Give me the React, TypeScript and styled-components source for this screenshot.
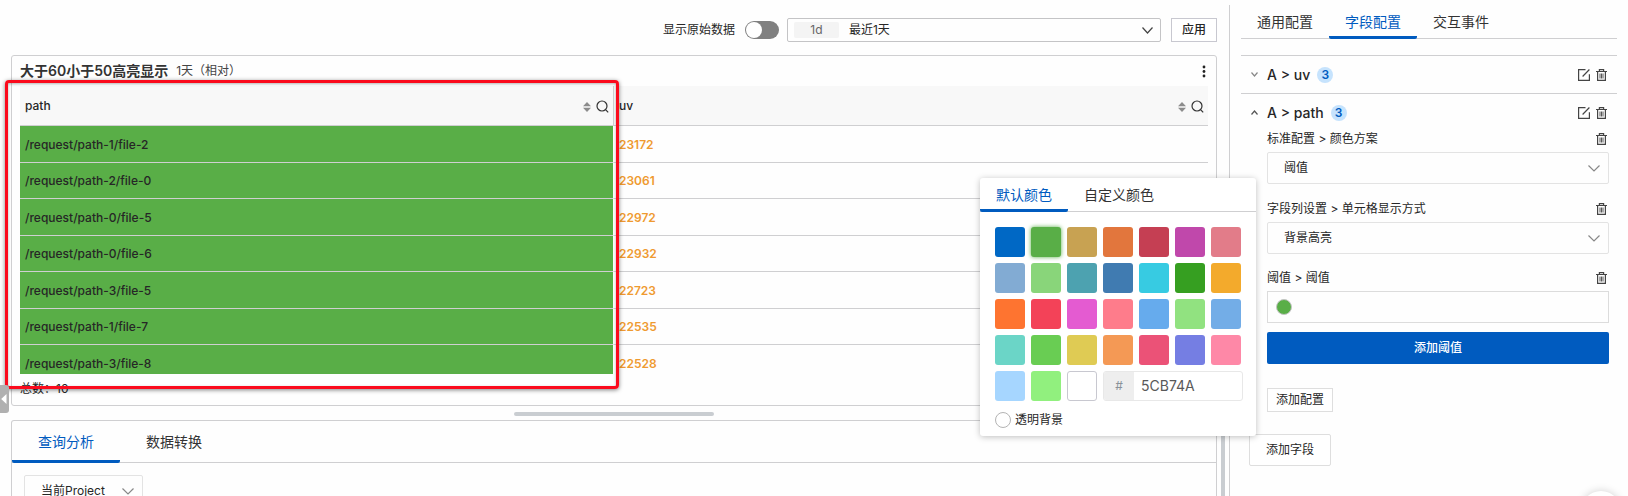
import React, { useState } from "react";
import styled, { createGlobalStyle } from "styled-components";

const BLUE = "#005bbf";
const LINE = "#cfcfd1";
const GREEN = "#59ae47";

const GlobalStyle = createGlobalStyle`
  *, *::before, *::after { box-sizing: border-box; }
  body {
    margin: 0;
    background: #fefefe;
    color: #262626;
    font: 12px/18px Inter, "Noto Sans CJK SC", sans-serif;
  }
  button, input, select { font: inherit; color: inherit; margin: 0; }
  button { cursor: pointer; }
  svg { display: block; flex: none; }
`;

const Page = styled.div`
  position: relative;
  display: flex;
  height: 100vh;
  overflow: hidden;
`;

const Main = styled.main`
  position: relative;
  flex: 1;
  min-width: 0;
  display: flex;
  flex-direction: column;
  padding: 18px 12px 0 11px;
`;

const Toolbar = styled.header`
  display: flex;
  justify-content: flex-end;
  align-items: center;
  height: 24px;
  margin-bottom: 13px;
`;

const SwitchLabel = styled.label`
  display: flex;
  align-items: center;
  gap: 10px;
  margin-right: 8px;
`;

const Switch = styled.input`
  appearance: none;
  width: 34px;
  height: 18px;
  border-radius: 9px;
  background: #808080;
  display: flex;
  align-items: center;
  padding: 1px;
  &::before {
    content: "";
    width: 16px;
    height: 16px;
    border-radius: 50%;
    background: #fff;
  }
`;

const RangeBox = styled.div`
  position: relative;
  display: flex;
  align-items: center;
  width: 374px;
  height: 24px;
  padding-left: 6px;
  border: 1px solid #c4c4c6;
  border-radius: 2px;
  margin-right: 10px;
`;

const RangeTag = styled.span`
  width: 45px;
  height: 16px;
  border-radius: 2px;
  background: #f4f4f4;
  color: #666;
  line-height: 16px;
  text-align: center;
`;

const BareSelect = styled.select<{ $indent: number }>`
  appearance: none;
  flex: 1;
  align-self: stretch;
  min-width: 0;
  border: 0;
  background: none;
  padding: 0 30px 0 ${(p) => p.$indent}px;
`;

const SelectArrow = styled.span<{ $right: number }>`
  position: absolute;
  right: ${(p) => p.$right}px;
  top: 0;
  bottom: 0;
  display: flex;
  align-items: center;
  pointer-events: none;
`;

const Button = styled.button<{ $size?: "small" | "medium" }>`
  height: ${(p) => (p.$size === "medium" ? 32 : 24)}px;
  padding: 0 ${(p) => (p.$size === "medium" ? 16 : 8)}px;
  border: 1px solid #dedede;
  border-radius: ${(p) => (p.$size === "medium" ? 2 : 0)}px;
  background: #fff;
`;

const ApplyButton = styled(Button)`
  padding: 0 10px;
  border-color: #c8c8d0;
  font-weight: 500;
`;

const PrimaryButton = styled.button`
  width: 100%;
  height: 32px;
  border: 0;
  border-radius: 2px;
  background: ${BLUE};
  color: #fff;
  font-weight: 500;
`;

const ChartPanel = styled.section`
  position: relative;
  border: 1px solid ${LINE};
  border-radius: 3px;
  padding: 0 8px;
`;

const PanelHeader = styled.div`
  display: flex;
  align-items: center;
  height: 30px;
`;

const PanelTitle = styled.h2`
  margin: 0 8px 0 0;
  font-size: 14px;
  line-height: 20px;
  font-weight: 600;
  color: #333;
`;

const PanelRange = styled.span`
  flex: 1;
  color: #444;
`;

const IconButton = styled.button`
  display: flex;
  align-items: center;
  justify-content: center;
  padding: 0;
  border: 0;
  background: none;
`;

const TableViewport = styled.div`
  height: 288px;
  overflow: hidden;
`;

const Table = styled.table`
  width: 100%;
  table-layout: fixed;
  border-collapse: separate;
  border-spacing: 0;
  text-align: left;
`;

const HeadCell = styled.th`
  height: 40px;
  padding: 0 4px 0 5px;
  background: #f8f8f8;
  border-bottom: 1px solid ${LINE};
  font-weight: 500;
  &:first-child { border-right: 1px solid ${LINE}; }
`;

const HeadContent = styled.div`
  display: flex;
  align-items: center;
  justify-content: space-between;
`;

const HeadTools = styled.div`
  display: flex;
  align-items: center;
  gap: 5px;
  padding-top: 2px;
`;

const Row = styled.tr`
  height: 36px;
  &:nth-child(odd) { height: 37px; }
`;

const PathCell = styled.td`
  padding: 1px 5px 0;
  background: ${GREEN};
  background-clip: padding-box;
  border-bottom: 1px solid ${LINE};
  border-right: 1px solid #fff;
  font-weight: 500;
`;

const ValueCell = styled.td`
  padding: 1px 5px 0;
  border-bottom: 1px solid ${LINE};
  color: #ef9a30;
  font-weight: 600;
`;

const Total = styled.p`
  margin: 0;
  padding: 6px 0 7px;
`;

const Highlight = styled.div`
  position: absolute;
  left: -7px;
  top: 24px;
  bottom: 16px;
  width: calc(50% + 12px);
  border: 3px solid #fb0a1c;
  border-radius: 4px;
  box-shadow: 0 1px 4px rgba(0, 0, 0, 0.5), inset 0 1px 3px rgba(0, 0, 0, 0.3);
  pointer-events: none;
`;

const RowResizer = styled.div`
  display: flex;
  justify-content: center;
  padding: 6px 0 4px;
  &::before {
    content: "";
    width: 200px;
    height: 4px;
    border-radius: 2px;
    background: #c9cdd1;
  }
`;

const ColumnResizer = styled.div`
  position: absolute;
  right: 4px;
  top: 400px;
  bottom: 0;
  width: 4px;
  background: #c9cdd1;
`;

const CollapseButton = styled.button`
  position: absolute;
  left: 0;
  top: 385px;
  width: 9px;
  height: 28px;
  padding: 0;
  border: 0;
  border-radius: 0 3px 3px 0;
  background: #b0b0b0;
`;

const QueryPanel = styled.section`
  flex: 1;
  min-height: 90px;
  border: 1px solid ${LINE};
  border-bottom: 0;
  border-radius: 3px 3px 0 0;
`;

const TabBar = styled.div<{ $height: number }>`
  display: flex;
  height: ${(p) => p.$height}px;
  border-bottom: 1px solid ${LINE};
`;

const Tab = styled.button<{ $active: boolean; $wide?: boolean }>`
  margin-bottom: -1px;
  padding: 3px ${(p) => (p.$wide ? 26 : 16)}px 0;
  border: 0;
  border-bottom: 3px solid ${(p) => (p.$active ? BLUE : "transparent")};
  border-radius: 0 0 2px 2px;
  background: none;
  font-size: 14px;
  line-height: 20px;
  color: ${(p) => (p.$active ? BLUE : "#333")};
`;

const QueryBody = styled.div`
  padding: 12px;
`;

const SelectBox = styled.div<{ $width?: number }>`
  position: relative;
  display: flex;
  width: ${(p) => (p.$width ? `${p.$width}px` : "100%")};
  height: 32px;
  border: 1px solid #e3e3e3;
  border-radius: 2px;
`;

const Sidebar = styled.aside`
  flex: none;
  width: 399px;
  margin-top: 5px;
  padding: 0 11px;
  border-left: 1px solid ${LINE};
`;

const FieldGroup = styled.section`
  border-top: 1px solid ${LINE};
`;

const FieldList = styled.div`
  margin-top: 16px;
`;

const FieldHead = styled.div`
  display: flex;
  align-items: center;
  height: 37px;
  padding: 0 10px;
`;

const FieldName = styled.h3`
  margin: 0 7px 0 9px;
  font-size: 14px;
  line-height: 20px;
  font-weight: 500;
`;

const Badge = styled.span`
  width: 16px;
  height: 16px;
  border-radius: 50%;
  background: #c6e3fd;
  color: ${BLUE};
  line-height: 16px;
  text-align: center;
  font-weight: 600;
`;

const FieldActions = styled.div`
  display: flex;
  gap: 6px;
  margin-left: auto;
`;

const FieldBody = styled.div`
  padding: 0 8px 0 26px;
`;

const Setting = styled.div<{ $gap: number }>`
  margin-bottom: ${(p) => p.$gap}px;
`;

const SettingHead = styled.div`
  display: flex;
  justify-content: space-between;
  align-items: center;
  height: 16px;
  margin-bottom: 5px;
  padding-right: 2px;
`;

const Threshold = styled.div`
  position: relative;
  display: flex;
  align-items: center;
  height: 32px;
  padding-left: 8px;
  border: 1px solid #dcdcdc;
`;

const ColorDot = styled.button`
  width: 16px;
  height: 16px;
  padding: 0;
  border: 1px solid #c4c4c4;
  border-radius: 50%;
  background: ${GREEN};
`;

const AddFieldRow = styled.div`
  padding: 22px 8px;
`;

const Picker = styled.div`
  position: absolute;
  right: calc(100% + 12px);
  top: -114px;
  width: 276px;
  border-radius: 3px;
  background: #fff;
  box-shadow: 0 1px 6px rgba(0, 0, 0, 0.25);
  z-index: 2;
`;

const PickerBody = styled.div`
  padding: 15px 13px 7px 15px;
`;

const Swatches = styled.div`
  display: grid;
  grid-template-columns: repeat(7, 30px);
  gap: 6px;
`;

const Swatch = styled.button<{ $color: string; $selected: boolean }>`
  height: 30px;
  padding: 0;
  border: ${(p) => (p.$color === "#ffffff" ? "1px solid #c8c8d0" : "0")};
  border-radius: 3px;
  background: ${(p) => p.$color};
  box-shadow: ${(p) => (p.$selected ? `0 0 4px ${p.$color}` : "none")};
`;

const HexField = styled.label`
  grid-column: 4 / -1;
  display: flex;
  width: 140px;
  height: 30px;
  border: 1px solid #e8e8e8;
  border-radius: 3px;
  overflow: hidden;
`;

const HexMark = styled.span`
  width: 30px;
  background: #eee;
  color: #8a9299;
  line-height: 28px;
  text-align: center;
`;

const HexInput = styled.input`
  flex: 1;
  min-width: 0;
  border: 0;
  background: none;
  padding: 0 7px;
  font-size: 14px;
  color: #595959;
`;

const TransparentOption = styled.label`
  display: flex;
  align-items: center;
  gap: 4px;
  margin-top: 10px;
`;

const Radio = styled.input`
  appearance: none;
  width: 16px;
  height: 16px;
  margin: 0;
  border: 1px solid #b4b4b4;
  border-radius: 50%;
  background: #fff;
`;

const HelpBubble = styled.button`
  position: absolute;
  right: 7px;
  bottom: -35px;
  width: 40px;
  height: 40px;
  border: 0;
  border-radius: 50%;
  background: #fff;
  box-shadow: 0 0 8px rgba(0, 0, 0, 0.18);
`;

const Chevron = ({ w = 12, h = 7, up = false, color = "#888" }: { w?: number; h?: number; up?: boolean; color?: string }) => (
  <svg width={w} height={h} viewBox={`0 0 ${w} ${h}`} fill="none" stroke={color} strokeWidth="1.2">
    <path d={up ? `M.5 ${h - 0.5} L${w / 2} 1 L${w - 0.5} ${h - 0.5}` : `M.5 .5 L${w / 2} ${h - 1} L${w - 0.5} .5`} />
  </svg>
);

const SortIcon = () => (
  <svg width="8" height="10" viewBox="0 0 8 10" fill="#8c8c8c">
    <path d="M4 0 8 4.2H0zM4 10 0 5.8h8z" />
  </svg>
);

const SearchIcon = () => (
  <svg width="13" height="13" viewBox="0 0 13 13" fill="none" stroke="#333" strokeWidth="1.2">
    <circle cx="6" cy="6" r="5" />
    <path d="m9.3 9.3 2.9 3" />
  </svg>
);

const KebabIcon = () => (
  <svg width="8" height="13" viewBox="0 0 8 13" fill="#222">
    <circle cx="4" cy="2" r="1.4" />
    <circle cx="4" cy="6.5" r="1.4" />
    <circle cx="4" cy="11" r="1.4" />
  </svg>
);

const EditIcon = () => (
  <svg width="12" height="12" viewBox="0 0 12 12" fill="none" stroke="#444" strokeWidth="1.2">
    <path d="M7.5.6H.6v10.8h10.8V5.2M4.6 7.5l6.8-7" />
  </svg>
);

const TrashIcon = () => (
  <svg width="11" height="12" viewBox="0 0 11 12" fill="none" stroke="#444" strokeWidth="1.2">
    <path d="M0 2.5h11M3.4 2.4V.6h4.2v1.8M1.6 2.8v8.5h7.8V2.8" />
    <path d="M4 4.5v5M5.5 4.5v5M7 4.5v5" strokeWidth=".9" />
  </svg>
);

const rows: [string, number][] = [
  ["/request/path-1/file-2", 23172],
  ["/request/path-2/file-0", 23061],
  ["/request/path-0/file-5", 22972],
  ["/request/path-0/file-6", 22932],
  ["/request/path-3/file-5", 22723],
  ["/request/path-1/file-7", 22535],
  ["/request/path-3/file-8", 22528],
];

const palette = [
  "#0068c5", "#59ae47", "#c8a252", "#e2763d", "#c53f53", "#c048ab", "#e27c89",
  "#82abd3", "#89d57a", "#4da2b0", "#407bb1", "#37cbe2", "#369f21", "#f3aa2c",
  "#fe7430", "#f34258", "#e45bd1", "#fe7c8b", "#66abed", "#91e280", "#73ade7",
  "#6bd5c7", "#69cd53", "#dfcb54", "#f49955", "#eb5277", "#757ee3", "#fe88a7",
  "#a6d6ff", "#91f07e", "#ffffff",
];

function ColumnHead({ name }: { name: string }) {
  return (
    <HeadCell scope="col">
      <HeadContent>
        {name}
        <HeadTools>
          <IconButton aria-label={`sort ${name}`}><SortIcon /></IconButton>
          <IconButton aria-label={`search ${name}`}><SearchIcon /></IconButton>
        </HeadTools>
      </HeadContent>
    </HeadCell>
  );
}

function FieldHeader({ name, open }: { name: string; open: boolean }) {
  return (
    <FieldHead>
      <IconButton aria-label={`toggle ${name}`} aria-expanded={open}>
        <Chevron w={7} h={5} up={open} color={open ? "#555" : "#888"} />
      </IconButton>
      <FieldName>{name}</FieldName>
      <Badge>3</Badge>
      <FieldActions>
        <IconButton aria-label={`edit ${name}`}><EditIcon /></IconButton>
        <IconButton aria-label={`delete ${name}`}><TrashIcon /></IconButton>
      </FieldActions>
    </FieldHead>
  );
}

function SelectSetting({ id, label, value, gap }: { id: string; label: string; value: string; gap: number }) {
  return (
    <Setting $gap={gap}>
      <SettingHead>
        <label htmlFor={id}>{label}</label>
        <IconButton aria-label={`delete ${label}`}><TrashIcon /></IconButton>
      </SettingHead>
      <SelectBox>
        <BareSelect id={id} $indent={16}><option>{value}</option></BareSelect>
        <SelectArrow $right={8}><Chevron /></SelectArrow>
      </SelectBox>
    </Setting>
  );
}

function ColorPicker() {
  const [hex, setHex] = useState("5CB74A");
  const [selected, setSelected] = useState(1);
  return (
    <Picker>
      <TabBar $height={34} role="tablist">
        <Tab role="tab" $active aria-selected>默认颜色</Tab>
        <Tab role="tab" $active={false}>自定义颜色</Tab>
      </TabBar>
      <PickerBody>
        <Swatches>
          {palette.map((c, i) => (
            <Swatch key={c} aria-label={c} $color={c} $selected={i === selected} onClick={() => setSelected(i)} />
          ))}
          <HexField>
            <HexMark>#</HexMark>
            <HexInput value={hex} onChange={(e) => setHex(e.target.value)} />
          </HexField>
        </Swatches>
        <TransparentOption>
          <Radio type="radio" name="background" />
          透明背景
        </TransparentOption>
      </PickerBody>
    </Picker>
  );
}

export default function App() {
  return (
    <Page>
      <GlobalStyle />
      <Main>
        <Toolbar>
          <SwitchLabel>
            显示原始数据
            <Switch type="checkbox" role="switch" />
          </SwitchLabel>
          <RangeBox>
            <RangeTag>1d</RangeTag>
            <BareSelect aria-label="时间范围" $indent={10}><option>最近1天</option></BareSelect>
            <SelectArrow $right={7}><Chevron w={11} h={7} color="#444" /></SelectArrow>
          </RangeBox>
          <ApplyButton>应用</ApplyButton>
        </Toolbar>

        <ChartPanel>
          <PanelHeader>
            <PanelTitle>大于60小于50高亮显示</PanelTitle>
            <PanelRange>1天（相对）</PanelRange>
            <IconButton aria-label="more"><KebabIcon /></IconButton>
          </PanelHeader>
          <TableViewport>
            <Table>
              <thead>
                <tr>
                  <ColumnHead name="path" />
                  <ColumnHead name="uv" />
                </tr>
              </thead>
              <tbody>
                {rows.map(([path, uv]) => (
                  <Row key={path}>
                    <PathCell>{path}</PathCell>
                    <ValueCell>{uv}</ValueCell>
                  </Row>
                ))}
              </tbody>
            </Table>
          </TableViewport>
          <Total>总数：10</Total>
          <Highlight />
        </ChartPanel>

        <RowResizer />

        <QueryPanel>
          <TabBar $height={42} role="tablist">
            <Tab role="tab" $wide $active aria-selected>查询分析</Tab>
            <Tab role="tab" $wide $active={false}>数据转换</Tab>
          </TabBar>
          <QueryBody>
            <SelectBox $width={119}>
              <BareSelect aria-label="Project" $indent={16}><option>当前Project</option></BareSelect>
              <SelectArrow $right={8}><Chevron /></SelectArrow>
            </SelectBox>
          </QueryBody>
        </QueryPanel>
        <ColumnResizer />
        <CollapseButton aria-label="collapse">
          <svg width="8" height="12" viewBox="0 0 8 12" fill="#fff"><path d="M6.5 1v10L1.2 6z" /></svg>
        </CollapseButton>
      </Main>

      <Sidebar>
        <TabBar $height={34} role="tablist">
          <Tab role="tab" $active={false}>通用配置</Tab>
          <Tab role="tab" $active aria-selected>字段配置</Tab>
          <Tab role="tab" $active={false}>交互事件</Tab>
        </TabBar>
        <FieldList>
          <FieldGroup>
            <FieldHeader name="A > uv" open={false} />
          </FieldGroup>
          <FieldGroup>
            <FieldHeader name="A > path" open />
            <FieldBody>
              <SelectSetting id="scheme" label="标准配置 > 颜色方案" value="阈值" gap={17} />
              <SelectSetting id="cell" label="字段列设置 > 单元格显示方式" value="背景高亮" gap={16} />
              <Setting $gap={24}>
                <SettingHead>
                  阈值 &gt; 阈值
                  <IconButton aria-label="delete threshold"><TrashIcon /></IconButton>
                </SettingHead>
                <Setting $gap={9}>
                  <Threshold>
                    <ColorDot aria-label="color" />
                    <ColorPicker />
                  </Threshold>
                </Setting>
                <PrimaryButton>添加阈值</PrimaryButton>
              </Setting>
              <Button>添加配置</Button>
            </FieldBody>
          </FieldGroup>
        </FieldList>
        <AddFieldRow>
          <Button $size="medium">添加字段</Button>
        </AddFieldRow>
      </Sidebar>
      <HelpBubble aria-label="help" />
    </Page>
  );
}
